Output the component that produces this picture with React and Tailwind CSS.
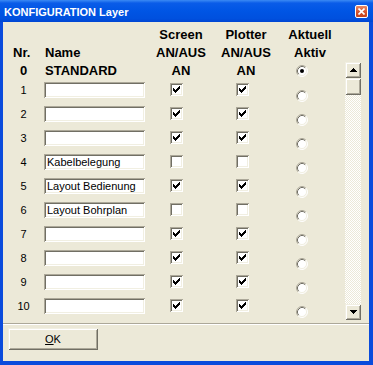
import React from "react";

const SUNKEN =
  "shadow-[inset_1px_1px_0_#aca899,inset_-1px_-1px_0_#ffffff,inset_2px_2px_0_#716f64,inset_-2px_-2px_0_#f1efe2]";
const RAISED =
  "shadow-[inset_1px_1px_0_#f1efe2,inset_-1px_-1px_0_#716f64,inset_2px_2px_0_#ffffff,inset_-2px_-2px_0_#aca899]";

function Check() {
  const cols = [2, 3, 4, 3, 2, 1, 0];
  return (
    <svg width="7" height="7" viewBox="0 0 7 7" shapeRendering="crispEdges">
      {cols.map((y, x) => (
        <rect key={x} x={x} y={y} width="1" height="3" fill="#000" />
      ))}
    </svg>
  );
}

function Checkbox({ checked }) {
  return (
    <div className={`w-[13px] h-[13px] bg-white ${SUNKEN} pl-[3px] pt-[3px]`}>
      {checked && <Check />}
    </div>
  );
}

function Radio({ selected }) {
  return (
    <svg width="12" height="12" viewBox="0 0 12 12">
      <circle cx="6" cy="6" r="5" fill="#fff" />
      <path d="M2.11 9.89 A5.5 5.5 0 0 1 9.89 2.11" fill="none" stroke="#aca899" strokeWidth="1" />
      <path d="M2.82 9.18 A4.5 4.5 0 0 1 9.18 2.82" fill="none" stroke="#716f64" strokeWidth="1" />
      <path d="M9.89 2.11 A5.5 5.5 0 0 1 2.11 9.89" fill="none" stroke="#ffffff" strokeWidth="1" />
      <path d="M9.18 2.82 A4.5 4.5 0 0 1 2.82 9.18" fill="none" stroke="#f1efe2" strokeWidth="1" />
      {selected && <circle cx="6" cy="6" r="2" fill="#000" />}
    </svg>
  );
}

function Arrow({ down }) {
  const rows = [
    [3, 1],
    [2, 3],
    [1, 5],
    [0, 7],
  ];
  const r = down ? [...rows].reverse() : rows;
  return (
    <svg width="7" height="4" viewBox="0 0 7 4" shapeRendering="crispEdges">
      {r.map(([x, w], y) => (
        <rect key={y} x={x} y={y} width={w} height="1" fill="#000" />
      ))}
    </svg>
  );
}

function Input({ value }) {
  return (
    <div
      className={`w-[101px] h-[16px] bg-white ${SUNKEN} pl-[3px] text-[11px] leading-[16px] whitespace-nowrap overflow-hidden`}
    >
      {value}
    </div>
  );
}

const rows = [
  { n: 1, name: "", s: true, p: true },
  { n: 2, name: "", s: true, p: true },
  { n: 3, name: "", s: true, p: true },
  { n: 4, name: "Kabelbelegung", s: false, p: false },
  { n: 5, name: "Layout Bedienung", s: true, p: true },
  { n: 6, name: "Layout Bohrplan", s: false, p: false },
  { n: 7, name: "", s: true, p: true },
  { n: 8, name: "", s: true, p: true },
  { n: 9, name: "", s: true, p: true },
  { n: 10, name: "", s: true, p: true },
];

export default function App() {
  return (
    <div className="w-[373px] h-[365px] flex flex-col bg-[#0a4bdc] font-['Liberation_Sans',Arial,sans-serif] text-black overflow-hidden">
      {/* Title bar */}
      <div className="h-[22px] shrink-0 flex items-start justify-between pl-[4px] pr-[5px] bg-[linear-gradient(to_bottom,#3b8af4_0%,#0a5ce8_14%,#0055e4_50%,#0050de_85%,#0045d2_100%)]">
        <span className="mt-[5px] text-[11px] leading-[14px] font-bold text-white whitespace-nowrap">
          KONFIGURATION Layer
        </span>
        <div className="mt-[5px] w-[13px] h-[13px] rounded-[2px] border border-white bg-[linear-gradient(to_bottom,#e98a66,#d5532c_55%,#c2411d)] flex items-center justify-center">
          <svg width="7" height="7" viewBox="0 0 7 7">
            <path d="M0.5 0.5 L6.5 6.5 M6.5 0.5 L0.5 6.5" stroke="#fff" strokeWidth="1.6" />
          </svg>
        </div>
      </div>

      {/* Client area */}
      <div className="flex-1 ml-[3px] mr-[4px] mb-[4px] bg-[#ece9d8] flex flex-col">
        <div className="flex">
          {/* Table */}
          <div className="w-[342px] pt-[4px]">
            {/* Header line 1 */}
            <div className="flex h-[18px] text-[13px] leading-[18px] font-bold">
              <div className="w-[41px]" />
              <div className="w-[111px]" />
              <div className="w-[52px] text-center">Screen</div>
              <div className="w-[13px]" />
              <div className="w-[52px] text-center">Plotter</div>
              <div className="w-[12px]" />
              <div className="w-[52px] text-center">Aktuell</div>
            </div>
            {/* Header line 2 */}
            <div className="flex h-[18px] text-[13px] leading-[18px] font-bold">
              <div className="w-[41px] pl-[10px]">Nr.</div>
              <div className="w-[111px] pl-[1px]">Name</div>
              <div className="w-[52px] text-center whitespace-nowrap">AN/AUS</div>
              <div className="w-[13px]" />
              <div className="w-[52px] text-center whitespace-nowrap">AN/AUS</div>
              <div className="w-[12px]" />
              <div className="w-[52px] text-center">Aktiv</div>
            </div>
            {/* Row 0 */}
            <div className="flex h-[18px] text-[13px] leading-[18px] font-bold items-center">
              <div className="w-[41px] text-center">0</div>
              <div className="w-[111px] pl-[1px]">STANDARD</div>
              <div className="w-[52px] text-center">AN</div>
              <div className="w-[13px]" />
              <div className="w-[52px] text-center">AN</div>
              <div className="w-[12px]" />
              <div className="w-[52px] pl-[12px] flex items-center">
                <Radio selected />
              </div>
            </div>
            {/* Rows */}
            <div className="mt-[2px] flex flex-col">
              {rows.map((r) => (
                <div key={r.n} className="flex items-start h-[24px]">
                  <div className="w-[41px] h-[16px] flex items-center justify-center text-[11px] leading-[16px]">
                    {r.n}
                  </div>
                  <div className="w-[111px]">
                    <Input value={r.name} />
                  </div>
                  <div className="w-[52px] pl-[15px] pt-[1px]">
                    <Checkbox checked={r.s} />
                  </div>
                  <div className="w-[13px]" />
                  <div className="w-[52px] pl-[16px] pt-[1px]">
                    <Checkbox checked={r.p} />
                  </div>
                  <div className="w-[12px]" />
                  <div className="w-[52px] pl-[12px] pt-[8px] flex">
                    <Radio />
                  </div>
                </div>
              ))}
            </div>
          </div>

          {/* Scrollbar */}
          <div className="w-[16px] mt-[40px] h-[258px] flex flex-col">
            <div className={`h-[16px] bg-[#ece9d8] ${RAISED} flex items-center justify-center`}>
              <Arrow />
            </div>
            <div className={`h-[17px] bg-[#ece9d8] ${RAISED}`} />
            <div className="flex-1 bg-[repeating-conic-gradient(#ffffff_0_25%,#ece9d8_0_50%)] bg-[length:2px_2px]" />
            <div className={`h-[16px] bg-[#ece9d8] ${RAISED} flex items-center justify-center`}>
              <Arrow down />
            </div>
          </div>
        </div>

        {/* Separator */}
        <div className="mt-[1px] h-[2px] border-t border-[#aca899] border-b border-b-white" />

        {/* OK button */}
        <div
          className={`mt-[3px] ml-[5px] w-[90px] h-[22px] bg-[#ece9d8] ${RAISED} flex items-center justify-center text-[11px] leading-[14px]`}
        >
          <span>
            <span className="underline underline-offset-[1px]">O</span>K
          </span>
        </div>
      </div>
    </div>
  );
}
